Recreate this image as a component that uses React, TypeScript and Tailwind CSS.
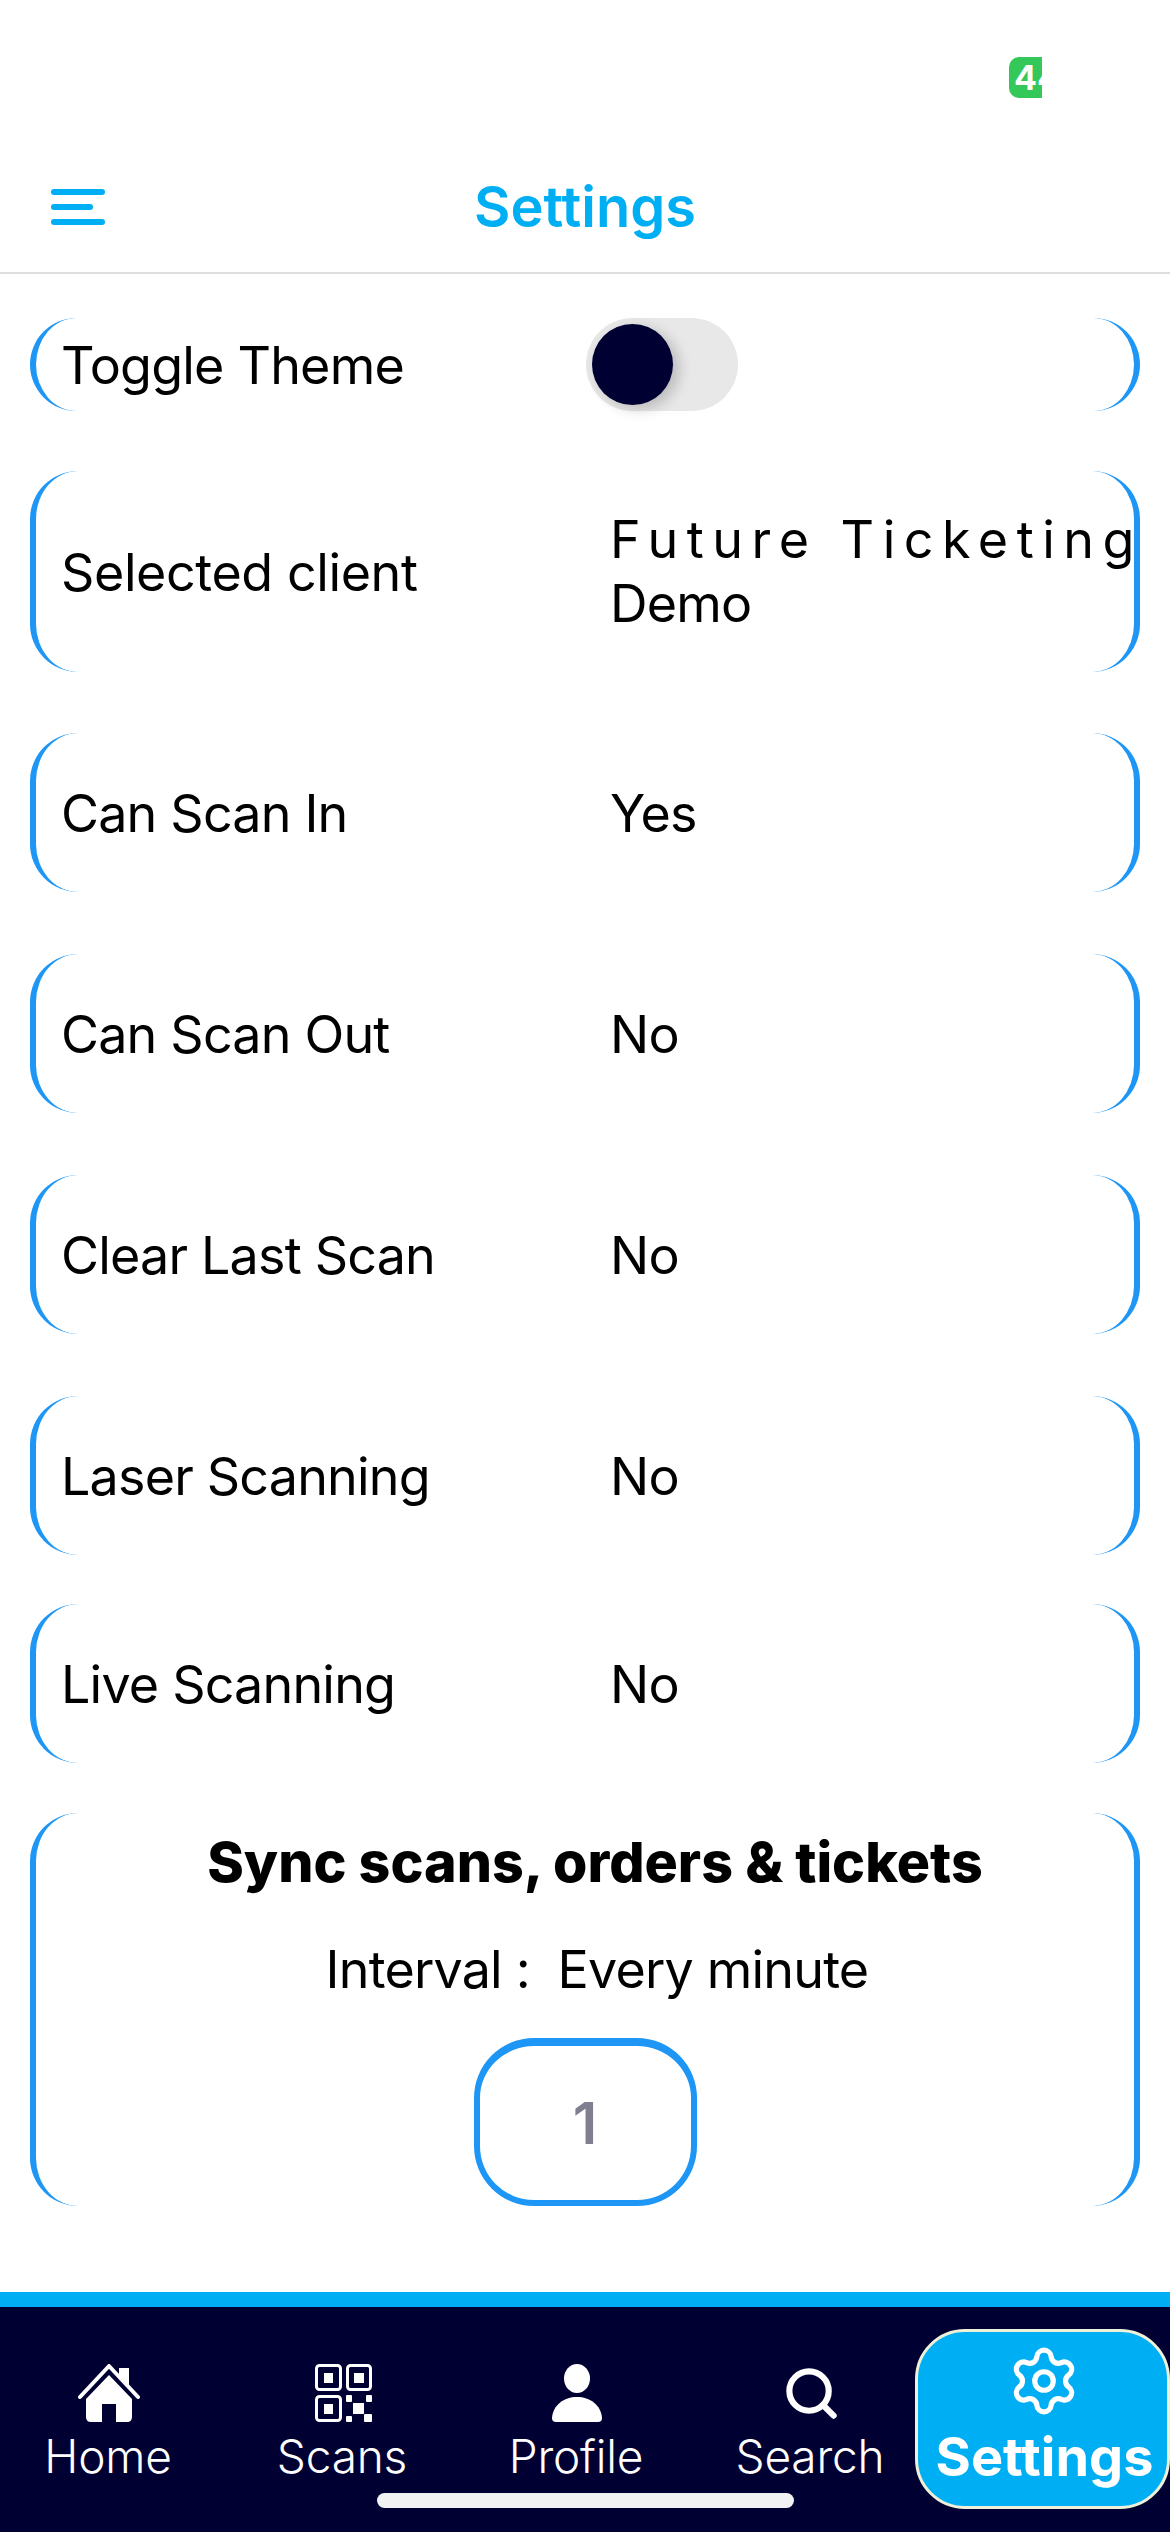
import React from 'react';
import { Search, Settings } from 'lucide-react';

const sans = 'font-["Inter",sans-serif]';

const Row = ({ label, value, className }: { label: string; value: string; className: string }) => (
  <div className={`flex items-center mx-[30px] pl-[25px] pt-[2px] border-x-[6px] border-[#1e96f5] rounded-[48px] ${className}`}>
    <span className="w-[549px] shrink-0 text-[52px] tracking-[-0.8px] text-black">{label}</span>
    <span className="text-[52px] tracking-[-0.8px] text-black">{value}</span>
  </div>
);

const HomeIcon = () => (
  <svg width="62" height="58" viewBox="0 0 62 58" fill="none">
    <path d="M31 11 L8 35 V53 Q8 58 13 58 H24 V40 H38 V58 H49 Q54 58 54 53 V35 Z" fill="#fff" />
    <path d="M2 33 L31 2 L60 33" stroke="#fff" strokeWidth="4" strokeLinecap="round" strokeLinejoin="round" />
    <path d="M41 4 H51 V24 L41 13 Z" fill="#fff" />
  </svg>
);

const QrIcon = () => (
  <svg width="57" height="58" viewBox="0 0 57 58" fill="none">
    <rect x="1.5" y="1.5" width="24" height="24" rx="3" stroke="#fff" strokeWidth="3" />
    <rect x="9" y="9" width="9" height="10" fill="#fff" />
    <rect x="32.5" y="1.5" width="23" height="24" rx="3" stroke="#fff" strokeWidth="3" />
    <rect x="39" y="9" width="10" height="10" fill="#fff" />
    <rect x="1.5" y="32.5" width="24" height="24" rx="3" stroke="#fff" strokeWidth="3" />
    <rect x="9" y="40" width="9" height="10" fill="#fff" />
    <rect x="31" y="31" width="6" height="7" rx="1" fill="#fff" />
    <rect x="51" y="31" width="6" height="7" rx="1" fill="#fff" />
    <rect x="38" y="39" width="11" height="11" fill="#fff" />
    <rect x="31" y="52" width="6" height="6" rx="1" fill="#fff" />
    <rect x="49" y="50" width="8" height="8" rx="1" fill="#fff" />
  </svg>
);

const ProfileIcon = () => (
  <svg width="50" height="58" viewBox="0 0 50 58" fill="#fff">
    <ellipse cx="25" cy="14.5" rx="13" ry="14.5" />
    <path d="M0 54 C1 41 12 33 25 33 C38 33 49 41 50 54 Q50 58 46 58 H4 Q0 58 0 54 Z" />
  </svg>
);

const NavItem = ({ label, icon }: { label: string; icon: React.ReactNode }) => (
  <div className="w-[216px] flex flex-col items-center pt-[57px]">
    <div className="h-[58px] ml-[2px] flex items-center justify-center">{icon}</div>
    <span className="mt-[6px] text-[46px] leading-[56px] tracking-[-0.2px] text-white font-light">{label}</span>
  </div>
);

export default function App() {
  return (
    <div className={`relative w-[1170px] h-[2532px] bg-white flex flex-col overflow-hidden ${sans}`}>
      {/* status bar */}
      <div className="h-[156px] flex justify-end items-start pt-[57px] pr-[128px]">
        <div className="w-[33px] h-[41px] overflow-hidden bg-[#34c85a] rounded-l-[10px] pl-[5px] text-[34px] leading-[41px] font-bold text-white">
          44
        </div>
      </div>

      {/* header */}
      <div className="relative h-[118px] flex items-center justify-center border-b-2 border-[#dedede]">
        <div className="absolute left-[51px] top-[33px] w-[54px] flex flex-col gap-[9px]">
          <div className="h-[6px] rounded-full bg-[#00aef3]" />
          <div className="h-[6px] w-[42px] rounded-full bg-[#00aef3]" />
          <div className="h-[6px] rounded-full bg-[#00aef3]" />
        </div>
        <span className="text-[56px] font-semibold text-[#00aef3] -mt-[14px]">Settings</span>
      </div>

      <div className="flex items-center mx-[30px] mt-[44px] h-[93px] pl-[25px] border-x-[6px] border-[#1e96f5] rounded-[48px]">
        <span className="w-[525px] shrink-0 pt-[2px] text-[52px] tracking-[-0.8px] text-black">Toggle Theme</span>
        <div className="w-[152px] h-[93px] rounded-full bg-[#e8e8e8] flex items-center pl-[6px]">
          <div className="w-[81px] h-[81px] rounded-full bg-[#000033] shadow-[6px_4px_14px_rgba(0,0,0,0.2)]" />
        </div>
      </div>

      <div className="flex items-center mx-[30px] mt-[60px] h-[201px] pl-[25px] border-x-[6px] border-[#1e96f5] rounded-[48px]">
        <span className="w-[549px] shrink-0 pt-[2px] text-[52px] tracking-[-0.4px] text-black">Selected client</span>
        <span className="text-[52px] leading-[64px] tracking-[-0.8px] text-black">
          <span className="block tracking-[8.5px] whitespace-nowrap">Future Ticketing</span>
          <span className="block">Demo</span>
        </span>
      </div>

      <Row label="Can Scan In" value="Yes" className="mt-[61px] h-[159px]" />
      <Row label="Can Scan Out" value="No" className="mt-[62px] h-[159px]" />
      <Row label="Clear Last Scan" value="No" className="mt-[62px] h-[159px]" />
      <Row label="Laser Scanning" value="No" className="mt-[62px] h-[159px]" />
      <Row label="Live Scanning" value="No" className="mt-[49px] h-[159px]" />

      {/* sync card */}
      <div className="mx-[30px] mt-[50px] h-[393px] border-x-[6px] border-[#1e96f5] rounded-[48px] flex flex-col items-center">
        <span className="mt-[13px] ml-[20px] text-[55.5px] leading-[72px] font-extrabold text-black whitespace-nowrap">
          Sync scans, orders &amp; tickets
        </span>
        <span className="mt-[36px] ml-[24px] text-[52px] leading-[72px] tracking-[-0.8px] text-black whitespace-pre">
          Interval :  Every minute
        </span>
        <div className="mt-auto w-[223px] h-[168px] border-[6px] border-t-[8px] border-[#1e96f5] rounded-[60px] flex items-center justify-center">
          <span className="text-[58px] font-semibold text-[#7f7f8f]">1</span>
        </div>
      </div>

      {/* bottom tabs */}
      <div className="mt-auto h-[240px] border-t-[15px] border-[#00aef3] bg-[#000033] flex gap-[18px]">
        <NavItem label="Home" icon={<HomeIcon />} />
        <NavItem label="Scans" icon={<QrIcon />} />
        <NavItem label="Profile" icon={<ProfileIcon />} />
        <NavItem label="Search" icon={<Search size={59} color="#fff" strokeWidth={2.5} />} />
        <div className="-ml-[21px] mt-[22px] w-[255px] h-[180px] shrink-0 bg-[#00aef3] border-[3px] border-[#eef0d8] rounded-[50px] flex flex-col items-center pt-[12px]">
          <Settings size={74} color="#fff" strokeWidth={1.7} className="ml-[2px]" />
          <span className="text-[54px] leading-[62px] font-bold text-white mt-[8px] ml-[4px]">Settings</span>
        </div>
      </div>

      {/* home indicator */}
      <div className="absolute left-[377px] top-[2493px] w-[417px] h-[15px] rounded-full bg-[#f2f2f2]" />
    </div>
  );
}
